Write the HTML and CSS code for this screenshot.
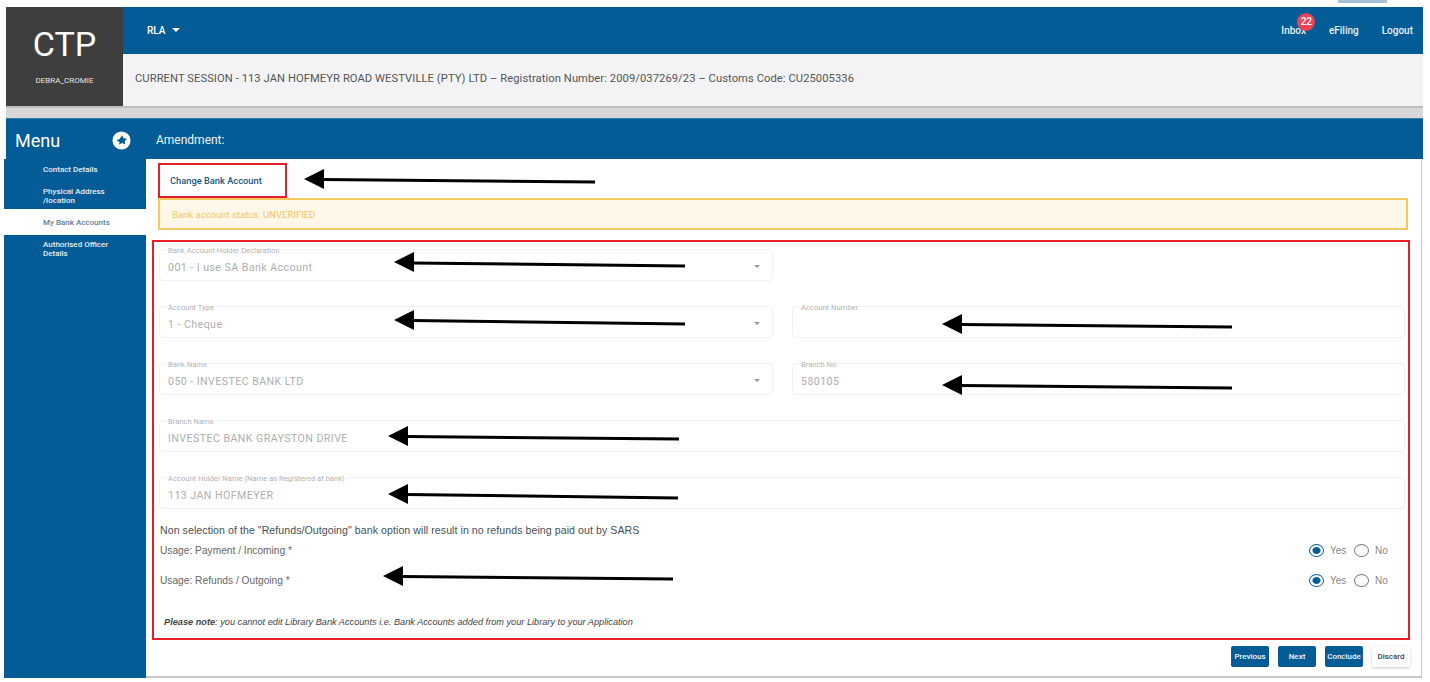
FILE: index.html
```html
<!DOCTYPE html>
<html lang="en">
<head>
<meta charset="utf-8">
<title>CTP - Amendment</title>
<link rel="stylesheet" href="styles.css">
</head>
<body>
<div class="page">
  <div class="strip"><span class="strip-tab"></span></div>
  <header class="top">
    <div class="brand">
      <div class="brand-name">CTP</div>
      <div class="brand-user">DEBRA_CROMIE</div>
    </div>
    <div class="top-right">
      <nav class="nav">
        <div class="nav-rla">RLA <span class="caret caret-white"></span></div>
        <div class="nav-links">
          <a class="nav-link nav-inbox">Inbox<span class="badge">22</span></a>
          <a class="nav-link">eFiling</a>
          <a class="nav-link">Logout</a>
        </div>
      </nav>
      <div class="session">CURRENT SESSION - 113 JAN HOFMEYR ROAD WESTVILLE (PTY) LTD – Registration Number: 2009/037269/23 – Customs Code: CU25005336</div>
    </div>
  </header>
  <div class="divider"></div>
  <div class="menubar">
    <div class="menu-head">
      <span class="menu-title">Menu</span>
      <svg class="menu-icon" viewBox="0 0 20 20" width="19" height="19" aria-hidden="true">
        <circle cx="10" cy="10" r="9.5" fill="#fff"/>
        <path d="M10.5 4.5l1.7 3.2 3.6.5-2.5 2.5.6 3.6-3.2-1.7-3.2 1.7.4-2.6-3.4-1.9 3.6-1.3z" fill="#045c96"/>
      </svg>
    </div>
    <div class="menu-crumb">Amendment:</div>
  </div>
  <div class="body">
    <aside class="sidebar">
      <a class="side-item side-contact">Contact Details</a>
      <a class="side-item side-physical">Physical Address /location</a>
      <a class="side-item side-active">My Bank Accounts</a>
      <a class="side-item side-officer">Authorised Officer Details</a>
    </aside>
    <main class="main">
      <div class="change-box"><a class="change-link">Change Bank Account</a></div>
      <div class="alert">Bank account status: UNVERIFIED</div>
      <section class="form-box">
        <div class="form-grid">
          <div class="field"><span class="field-label">Bank Account Holder Declaration</span><span class="field-value">001 - I use SA Bank Account</span><span class="caret caret-grey field-caret"></span></div>
          <div class="field-empty"></div>
          <div class="field"><span class="field-label">Account Type</span><span class="field-value">1 - Cheque</span><span class="caret caret-grey field-caret"></span></div>
          <div class="field"><span class="field-label">Account Number</span></div>
          <div class="field"><span class="field-label">Bank Name</span><span class="field-value">050 - INVESTEC BANK LTD</span><span class="caret caret-grey field-caret"></span></div>
          <div class="field"><span class="field-label">Branch No</span><span class="field-value">580105</span></div>
          <div class="field field-wide"><span class="field-label">Branch Name</span><span class="field-value">INVESTEC BANK GRAYSTON DRIVE</span></div>
          <div class="field field-wide"><span class="field-label">Account Holder Name (Name as Registered at bank)</span><span class="field-value">113 JAN HOFMEYER</span></div>
        </div>
        <p class="warning">Non selection of the "Refunds/Outgoing" bank option will result in no refunds being paid out by SARS</p>
        <div class="usage usage-first">
          <span class="usage-label">Usage: Payment / Incoming *</span>
          <div class="radios">
            <span class="radio radio-on"></span><span class="radio-text">Yes</span>
            <span class="radio"></span><span class="radio-text">No</span>
          </div>
        </div>
        <div class="usage">
          <span class="usage-label">Usage: Refunds / Outgoing *</span>
          <div class="radios">
            <span class="radio radio-on"></span><span class="radio-text">Yes</span>
            <span class="radio"></span><span class="radio-text">No</span>
          </div>
        </div>
        <p class="note"><b>Please note</b>: you cannot edit Library Bank Accounts i.e. Bank Accounts added from your Library to your Application</p>
      </section>
      <div class="actions">
        <button class="btn">Previous</button>
        <button class="btn">Next</button>
        <button class="btn">Conclude</button>
        <button class="btn btn-light">Discard</button>
      </div>
    </main>
  </div>
  <svg class="arrows" viewBox="0 0 1430 682" width="1430" height="682" aria-hidden="true">
    <g class="arrow-lines">
      <path d="M322 179.5 595 182"/>
      <path d="M412 263 685 266"/>
      <path d="M412 320.5 685 324"/>
      <path d="M960 324.5 1232 327"/>
      <path d="M960 385.5 1232 388"/>
      <path d="M406 436.5 679 439"/>
      <path d="M406 494.5 678 498"/>
      <path d="M401 576.5 673 579"/>
    </g>
    <g class="arrow-heads">
      <path d="M304 179 324 169V189z"/>
      <path d="M394 262 414 252V272z"/>
      <path d="M394 320 414 310V330z"/>
      <path d="M942 324 962 314V334z"/>
      <path d="M942 385 962 375V395z"/>
      <path d="M388 436 408 426V446z"/>
      <path d="M388 494 408 484V504z"/>
      <path d="M383 576 403 566V586z"/>
    </g>
  </svg>
</div>
</body>
</html>
```
FILE: styles.css
```css
* { box-sizing: border-box; }
html, body { margin: 0; padding: 0; background: #fff; }
body { font-family: Roboto, "Liberation Sans", Arial, sans-serif; color: #333; overflow: hidden; }
.page { position: relative; width: 1430px; height: 682px; overflow: hidden; }

.strip { height: 7px; display: flex; justify-content: flex-end; padding-right: 43px; }
.strip-tab { width: 49px; height: 3px; background: #a6c1d8; }

.top { display: flex; margin-left: 6px; width: 1417px; }
.brand { width: 117px; height: 99px; background: #3e3e3e; color: #fff; display: flex; flex-direction: column; align-items: center; }
.brand-name { font-size: 34px; line-height: 40px; margin-top: 17px; }
.brand-user { font-size: 8px; line-height: 10px; margin-top: 12px; color: #e6e6e6; }
.top-right { flex: 1; display: flex; flex-direction: column; }

.nav { height: 47px; background: #045c96; display: flex; align-items: center; justify-content: space-between; color: #fff; padding: 0 10px 0 24px; font-size: 10px; font-weight: 500; }
.nav-rla { display: flex; align-items: center; gap: 7px; margin-bottom: 1px; }
.nav-links { display: flex; gap: 23px; }
.nav-link { position: relative; color: #eaf1f6; }
.badge { position: absolute; left: 16px; top: -12px; width: 18px; height: 18px; border-radius: 50%; background: #ec4257; color: #fff; font-size: 10px; line-height: 18px; text-align: center; }

.session { height: 52px; background: #f3f3f5; display: flex; align-items: center; padding-left: 12px; font-size: 11.2px; color: #555; letter-spacing: 0.07px; padding-bottom: 3px; }

.divider { margin-left: 6px; width: 1417px; height: 12px; background: #d7d7d7; border-top: 2px solid #bdbdbd; }

.menubar { margin-left: 6px; width: 1417px; height: 41px; background: #045c96; display: flex; color: #fff; border-top: 1px solid #2d7aab; }
.menu-head { width: 140px; display: flex; align-items: center; justify-content: space-between; padding: 2px 14px 0 9px; border-right: 1px solid #0a5488; }
.menu-title { font-size: 18px; }
.menu-crumb { padding: 2px 0 0 10px; display: flex; align-items: center; font-size: 12px; color: #eef4f8; }

.caret { display: inline-block; width: 0; height: 0; border-left: 4px solid transparent; border-right: 4px solid transparent; border-top: 4px solid #fff; }
.caret-white { border-top-color: #fff; }
.caret-grey { border-left-width: 3.5px; border-right-width: 3.5px; border-top: 3px solid #999; }

.body { display: flex; margin-left: 4px; width: 1418px; height: 519px; }
.sidebar { width: 142px; background: #045c96; display: flex; flex-direction: column; padding-top: 6px; }
.side-item { font-size: 8px; line-height: 9px; font-weight: 500; color: #e4edf3; padding-left: 39px; padding-right: 32px; }
.side-physical { margin-top: 13px; }
.side-active { margin-top: 4px; height: 26px; background: #fff; color: #5f7e98; display: flex; align-items: center; }
.side-officer { margin-top: 5px; }

.main { flex: 1; background: #fff; border-right: 1px solid #c9c9c9; border-bottom: 2px solid #c9c9c9; padding: 4px 11px 0 6px; display: flex; flex-direction: column; }

.change-box { margin-left: 6px; width: 129px; height: 35px; border: 2px solid #e3202a; display: flex; align-items: center; padding-left: 10px; }
.change-link { font-size: 9.3px; font-weight: 500; color: #1d5583; }

.alert { margin: 0 2px 0 6px; height: 32px; border: 2px solid #f6c860; background: #fff8e8; display: flex; align-items: center; padding-left: 12px; font-size: 9.5px; color: #f5c46a; }

.form-box { margin-top: 10px; height: 400px; border: 2px solid #e51f28; padding: 7px 2px 0 5px; }
.form-grid { display: grid; grid-template-columns: 614px 613px; column-gap: 19px; row-gap: 25px; grid-auto-rows: 32px; }
.field { position: relative; border: 1px solid #f1f1f1; border-radius: 4px; display: flex; align-items: center; padding-left: 8px; padding-top: 5px; }
.field-wide { grid-column: 1 / -1; }
.field-label { position: absolute; left: 7px; top: -4px; padding: 0 2px 0 1px; background: #fff; font-size: 7.6px; line-height: 9px; color: #b2b2b2; white-space: nowrap; }
.field-value { font-size: 10.6px; letter-spacing: 0.45px; color: #aeaeae; }
.field-caret { position: absolute; right: 12px; top: 15px; }

.warning { margin: 14px 0 0 1px; font-family: "Liberation Sans", Arial, sans-serif; font-size: 10.6px; line-height: 14px; color: #46505a; letter-spacing: 0.06px; }
.usage { display: flex; justify-content: space-between; align-items: center; margin-left: 1px; height: 16px; font-family: "Liberation Sans", Arial, sans-serif; font-size: 10.2px; color: #666; margin-top: 14px; }
.usage-first { margin-top: 5px; }
.radios { display: flex; align-items: center; margin-right: 16px; color: #888; }
.radio { width: 15px; height: 13px; border: 1.4px solid #777; border-radius: 50%; display: block; margin-right: 6px; background: #fff; }
.radio-on { border-color: #045c96; background: radial-gradient(ellipse at center, #045c96 0 3.5px, #fff 4.5px); }
.radio-text { width: 22px; font-size: 10px; margin-right: 2px; }
.radio-text:last-child { width: 15px; margin-right: 0; }

.note { margin: 28px 0 0 5px; font-family: "Liberation Sans", Arial, sans-serif; font-size: 9.2px; line-height: 12px; font-style: italic; color: #444; }
.note b { font-weight: 700; }

.actions { display: flex; justify-content: flex-end; gap: 9px; margin-top: 6px; }
.btn { width: 38px; height: 21px; padding: 0; border: 0; border-radius: 2px; background: #045c96; color: #f1f6fa; font-family: Roboto, "Liberation Sans", Arial, sans-serif; font-size: 8px; font-weight: 500; }
.btn-light { background: #fff; color: #444; box-shadow: 0 1px 3px rgba(0,0,0,.22); }

.arrows { position: absolute; left: 0; top: 0; pointer-events: none; }
.arrow-lines path { stroke: #000; stroke-width: 3; fill: none; }
.arrow-heads path { fill: #000; }
```
